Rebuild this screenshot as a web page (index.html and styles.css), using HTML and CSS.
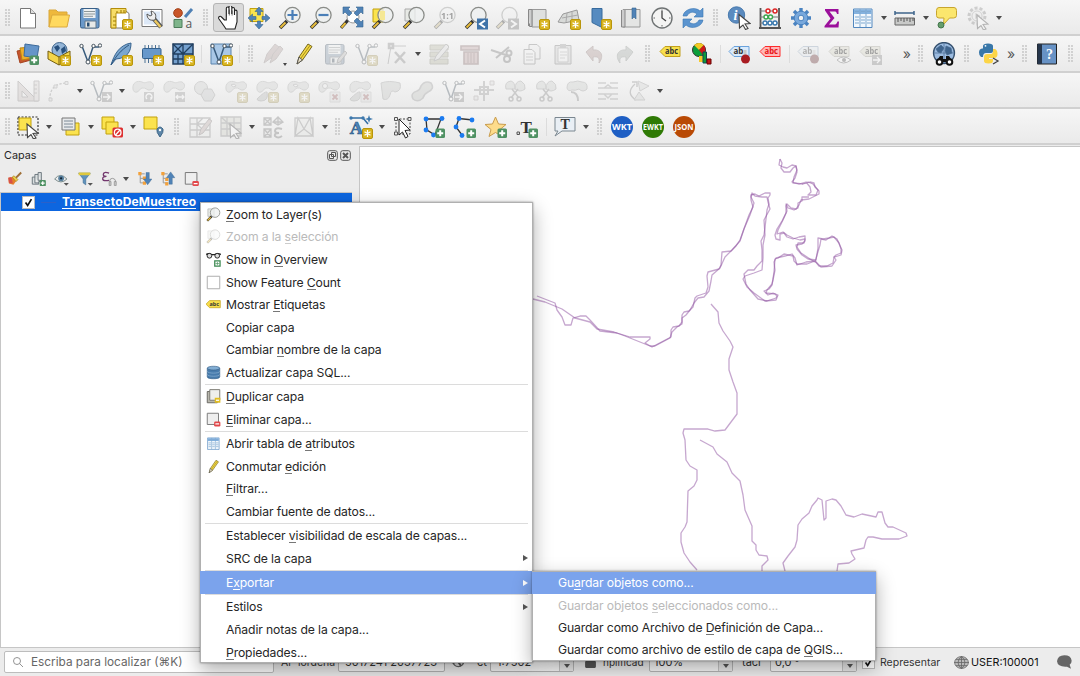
FILE: index.html
```html
<!DOCTYPE html>
<html lang="es">
<head>
<meta charset="utf-8">
<title>QGIS</title>
<link rel="stylesheet" href="styles.css">
</head>
<body>
<svg class="defs">
<defs>
<g id="star"><rect x="13.500" y="13.500" width="10" height="10" rx="1.500" class="gold"/><path d="M18.500 15v7M15.500 16.800l6 3.500M21.500 16.800l-6 3.500" class="w1"/></g>
<g id="plus"><rect x="13.500" y="13.500" width="9.500" height="9.500" rx="1.500" fill="#4f9163"/><path d="M18.200 15.300v6M15.200 18.300h6" stroke="#fff" stroke-width="2"/></g>
<g id="lens"><path d="M2 22l7-7" stroke="#333" stroke-width="3.600"/><path d="M2.500 21.500l5-5" stroke="#e8bd3c" stroke-width="2"/><circle cx="14.500" cy="9" r="7.600" fill="#eef0f0" fill-opacity=".75" stroke="#8a8c88" stroke-width="1.300"/></g>
<g id="cursor"><path d="M11 9l11 9-5 .5 3 4.500-2.500 1-2.500-4.500-3.500 3z" fill="#fff" stroke="#444" stroke-width="1.100"/></g>
<g id="blob"><path d="M2 10C1 4 6 1 11 3c4 2 5-1 9 0 4 2 3 7-1 8-3 1-4-3-8-2-3 1-3 4-5 4-2 1-4-1-4-3z" fill="#ccd0cc" stroke="#a3a6a3"/></g>
<g id="vee"><path d="M4 4l6 16 5-15h6" class="navy"/><g class="dot"><circle cx="3.500" cy="4" r="1.700"/><circle cx="10" cy="20" r="2"/><circle cx="15.500" cy="4" r="1.700"/><circle cx="22" cy="3.500" r="1.700"/></g></g>
<g id="tag"><path d="M1 9.500L6 4.500h15v10H6z"/></g>
</defs>
<symbol id="new" viewBox="0 0 24 24"><path d="M4.500 2.500h10l5 5v14.500h-15z" fill="#fff" stroke="#777"/><path d="M14.500 2.500v5h5" fill="#ddd" stroke="#777"/></symbol>
<symbol id="open" viewBox="0 0 24 24"><path d="M2 21V4h7l2 2h9v4" fill="#eeb83c" stroke="#d9a73a"/><path d="M2 21l3-12h17.500l-2.500 12z" fill="#ffd95f" stroke="#dba93c"/></symbol>
<symbol id="save" viewBox="0 0 24 24"><rect x="2.500" y="2.500" width="18.500" height="19.500" rx="1.500" fill="#6a99ca" stroke="#396089"/><path d="M5.500 3h12v9h-12z" fill="#eef1f2"/><path d="M6 5.500h11M6 8h11M6 10.300h9" stroke="#8c9799"/><path d="M7 15h11v7H7z" fill="#e6e9e8" stroke="#63798c"/><path d="M9 16.500h2.500v4H9z" fill="#264c73"/></symbol>
<symbol id="layout" viewBox="0 0 24 24"><path d="M2 2.500h12l6 5v14.500H2z" fill="#fff" stroke="#777"/><path d="M2 2.500h15v4.500H7v15H2z" fill="#f7dd68" stroke="#b38d0a"/><path d="M8 5v2m4-3v3m3-3v3M4 11h3m-3 4h3m-3 4h3" stroke="#9b7900"/><use href="#star"/></symbol>
<symbol id="manager" viewBox="0 0 24 24"><path d="M2 3.500h20v17H2z" fill="#fff" stroke="#777"/><path d="M4 5.500h16v13H4z" fill="#dce8f7"/><path d="M14 13l7 8" stroke="#55585a" stroke-width="4.500"/><path d="M14.500 14l6 7" stroke="#ecc85f" stroke-width="2.500"/><path d="M7 8c0 5 3 7 8 6 2-5 0-8-4-9l1 4-2 1z" fill="#eee" stroke="#555"/></symbol>
<symbol id="style" viewBox="0 0 24 24"><circle cx="7" cy="7" r="4.300" fill="#c95528" stroke="#a24017"/><path d="M14 11l7-8" stroke="#4f80b4" stroke-width="3"/><path d="M3 13.500h8v8H3z" fill="#7fb58b" stroke="#4d7c5a"/><text x="14.500" y="22" class="ic" font-size="12" fill="#555">a</text></symbol>
<symbol id="hand" viewBox="0 0 24 24"><path d="M7.500 15L4.500 12c-2-2-3.500.5-2.500 2l5 7 2 3h9l2-7V6.500c0-1.800-2.500-1.800-2.500 0V10 4c0-2-2.700-2-2.700 0v5-7c0-2-2.800-2-2.800 0v7-5.500c0-2-2.700-2-2.700 0V15z" transform="translate(1 -1)" fill="#fff" stroke="#222" stroke-width="1.100"/><path d="M10.500 3.500v7m2.800-7v6m2.800-5v5" stroke="#333" stroke-width=".7"/></symbol>
<symbol id="pan" viewBox="0 0 24 24"><path d="M3 2.500h13v13H3z" class="y"/><path d="M12 1l4 4.500h-2.500V9h-3V5.500H8zM12 23l4-4.500h-2.500V15h-3v3.500H8zM1 12l4.500-4v2.500H9v3H5.500V16zM23 12l-4.500-4v2.500H15v3h3.500V16z" class="blue"/></symbol>
<symbol id="zin" viewBox="0 0 24 24"><use href="#lens"/><path d="M14.500 4v10M9.500 9h10" stroke="#4a7fb8" stroke-width="2.200"/></symbol>
<symbol id="zout" viewBox="0 0 24 24"><use href="#lens"/><path d="M9.500 9h10" stroke="#4a7fb8" stroke-width="2.200"/></symbol>
<symbol id="zfull" viewBox="0 0 24 24"><path d="M1 22l8-9" stroke="#333" stroke-width="3.200"/><path d="M1.500 21.500l4-4.500" stroke="#e6bb3a" stroke-width="2"/><circle cx="13" cy="11" r="6" fill="#fff" stroke="#999"/><path d="M3 1h7L8 3l4 4-3 3-4-4-2 2zM23 1h-7l2 2-4 4 3 3 4-4 2 2zM23 21h-7l2-2-4-4 3-3 4 4 2-2z" class="blue"/></symbol>
<symbol id="zsel" viewBox="0 0 24 24"><path d="M2 3h10v13H2z" class="y"/><use href="#lens"/><path d="M9 5h5v9H9z" fill="#f5e894"/></symbol>
<symbol id="zlay" viewBox="0 0 24 24"><path d="M3 3h10v12H3z" fill="#e7e9e5" stroke="#aaa"/><use href="#lens"/></symbol>
<symbol id="znat" viewBox="0 0 24 24"><use href="#lens"/><text x="8" y="13" class="ic b" font-size="9">1:1</text></symbol>
<symbol id="zprev" viewBox="0 0 24 24"><use href="#lens"/><path d="M13 12.500h11v11H13z" fill="#3f73a8"/><path d="M21 14.500L16 18l5 3.500" class="w2"/></symbol>
<symbol id="znext" viewBox="0 0 24 24"><use href="#lens"/><path d="M13 12.500h11v11H13z" fill="#777"/><path d="M16 14.500l5 3.500-5 3.500" class="w2"/></symbol>
<symbol id="map2d" viewBox="0 0 24 24"><path d="M6 3.500h14V21H6z" fill="#dfe0df" stroke="#999"/><path d="M2.500 3.500H6v17H3.500v-3M2.500 3.500V20" fill="#ccc" stroke="#888"/><use href="#star"/></symbol>
<symbol id="map3d" viewBox="0 0 24 24"><path d="M1 16l5-8 14-4 2 10-15 3z" fill="#d8dad8" stroke="#999"/><path d="M5 12l16-3M10 7l-1 9M15 6v9" stroke="#aaa"/><use href="#star"/></symbol>
<symbol id="bmnew" viewBox="0 0 24 24"><path d="M4 2.500h10v19l-10-5z" fill="#568bc0" stroke="#376b9d"/><use href="#star"/></symbol>
<symbol id="bm" viewBox="0 0 24 24"><path d="M4 3.500h17V21H4z" fill="#e4e5e4" stroke="#999"/><path d="M2.500 4v17H6V4" fill="#ccc" stroke="#888"/><path d="M13 2h4v11l-2-2-2 2z" class="blue"/></symbol>
<symbol id="clock" viewBox="0 0 24 24"><circle cx="12" cy="12" r="10" fill="#f4f4f3" stroke="#6f7374" stroke-width="1.400"/><path d="M12 5v7l4 3" fill="none" stroke="#444" stroke-width="1.300"/><path d="M12 3.500v1.500M12 19v1.500M3.500 12H5M19 12h1.500" stroke="#666"/></symbol>
<symbol id="refresh" viewBox="0 0 24 24"><path d="M2 10c1-7 12-10 17-5l3-3v9h-9l3-3C12 5 8 6 6 10zM22 14c-1 7-12 10-17 5l-3 3v-9h9l-3 3c4 3 8 2 10-2z" fill="#5b94cf" stroke="#3977b3" stroke-width=".6"/></symbol>
<symbol id="info" viewBox="0 0 24 24"><circle cx="9.500" cy="9" r="8.200" fill="#5b8bbf" stroke="#487aae"/><text x="6.500" y="14" font-size="14" class="serif it" fill="#fff">i</text><g transform="translate(1 -.5)"><use href="#cursor"/></g></symbol>
<symbol id="abacus" viewBox="0 0 24 24"><path d="M2.500 2v19M21 2v19M1 22h22" stroke="#555" stroke-width="1.800"/><path d="M2 5h19M2 11h19M2 17h19" stroke="#777"/><g fill="#fff" stroke-width="1.400"><g stroke="#d22"><circle cx="10" cy="5" r="2"/><circle cx="17" cy="5" r="2"/></g><g stroke="#3aa74e"><circle cx="8" cy="11" r="2"/><circle cx="12.500" cy="11" r="2"/></g><g stroke="#3878ae"><circle cx="7" cy="17" r="2"/><circle cx="12" cy="17" r="2"/><circle cx="17" cy="17" r="2"/></g></g></symbol>
<symbol id="gear" viewBox="0 0 24 24"><path d="M12 2v20M2 12h20M5 5l14 14M19 5L5 19" stroke="#4a83c1" stroke-width="3.400"/><circle cx="12" cy="12" r="6.800" fill="#78a8dc" stroke="#4a83c1"/><circle cx="12" cy="12" r="2.800" fill="#f2f2f2" stroke="#4a83c1"/></symbol>
<symbol id="sigma" viewBox="0 0 24 24"><path d="M5 3h13.500v5H17c-.5-2-1-2.500-3-2.500H9.500l5 6.500-5.500 6.500h5c2 0 2.500-.5 3.500-3h1.500l-.5 6H4.500v-1.500l6-7.500L5 4.500z" fill="#9b0f9b"/></symbol>
<symbol id="table" viewBox="0 0 24 24"><path d="M2.500 3h18.500v18.500h-18.500z" fill="#f2f8fd" stroke="#5388bf"/><path d="M3 3.500h17.500V8H3z" fill="#84b2df"/><path d="M9 3v18M15 3v18M4 5.500h4m2 0h4m2 0h4M4 11h4m2 0h4m2 0h4M4 14h4m2 0h4m2 0h4M4 17h4m2 0h4m2 0h4" stroke="#7da7cf"/></symbol>
<symbol id="ruler" viewBox="0 0 24 24"><path d="M2 5v4M21 5v4M2 7h19" stroke="#3e648b" stroke-width="1.500"/><path d="M2 12h19.500v7H2z" fill="#c8c9c8" stroke="#666"/><path d="M5 12v4m3-4v3m3-3v4m3-4v3m3-3v4m3-4v3" stroke="#555"/></symbol>
<symbol id="tip" viewBox="0 0 24 24"><path d="M4 1.500h15q2.500 0 2.500 3v5q0 2.500-3 2.500h-4L8.500 18.500 9 12H4Q1.500 12 1.500 9.500v-5Q1.500 1.500 4 1.500z" fill="#fbe66d" stroke="#c7a52e"/><circle cx="6" cy="19" r="3" fill="#659d6c" stroke="#43764b"/></symbol>
<symbol id="action" viewBox="0 0 24 24"><circle cx="11" cy="10" r="8" fill="#e4e4e4" stroke="#888" stroke-width="3" stroke-dasharray="3 2"/><circle cx="11" cy="10" r="5" fill="#eee" stroke="#999"/><path d="M9.500 7l5 3-5 3z" fill="#888"/><use href="#cursor"/></symbol>
<symbol id="sources" viewBox="0 0 24 24"><path d="M1 9l11-2 3 11-11 3z" fill="#c6552d" stroke="#a64420"/><path d="M4 6l12-1 1 11-11 2z" fill="#eeae2b" stroke="#b9840e"/><path d="M9 2l14 2-2 12-13-2z" fill="#6595c9" stroke="#3d6a9a"/><use href="#plus"/></symbol>
<symbol id="gpkg" viewBox="0 0 24 24"><circle cx="12.500" cy="8" r="7.500" fill="#94b5d7" stroke="#41678e"/><path d="M7 5l4-2 2 3-3 4zM14 7l4-3 1 5-4 3z" fill="#28517e"/><path d="M1 9l11 6 11-6v8l-11 6-11-6z" fill="#f4d54a" stroke="#735d0e"/><path d="M12 15v8" stroke="#735d0e"/><use href="#star"/></symbol>
<symbol id="shp" viewBox="0 0 24 24"><use href="#vee"/><use href="#star"/></symbol>
<symbol id="feather" viewBox="0 0 24 24"><path d="M2 23C5 13 10 3 22 1c0 8-3 15-15 16z" fill="#7aa6cf" stroke="#39648f"/><path d="M2 23C7 14 12 8 20 3" fill="none" stroke="#2d5680"/><use href="#star"/></symbol>
<symbol id="chip" viewBox="0 0 24 24"><path d="M5 3v18M8.500 3v18M12 3v18M15.500 3v18M19 3v18" stroke="#4d7295"/><rect x="2.500" y="6.500" width="18.500" height="10" rx="1" fill="#6798cb" stroke="#35618c"/><use href="#star"/></symbol>
<symbol id="mesh" viewBox="0 0 24 24"><path d="M2 2h20v20H2z" fill="#74a0ce" stroke="#203e5f" stroke-width="1.500"/><path d="M2 12h20M12 2v20M2 2l10 10M12 2L2 12M12 12l10-10M2 17h10M7 12v10" stroke="#203e5f" stroke-width="1.300"/><use href="#star"/></symbol>
<symbol id="virt" viewBox="0 0 24 24"><path d="M2 2h20v20H2z" fill="#a9c8e7" stroke="#5b84ad"/><use href="#vee"/><use href="#star"/></symbol>
<symbol id="pencils" viewBox="0 0 24 24"><path d="M3 21l3-9 8-10 4 3-8 11z" fill="#c79c98" stroke="#a08784"/><path d="M9 21l3-9 7-8 3 3-7 10z" fill="#c79c98" stroke="#a08784"/></symbol>
<symbol id="pencil" viewBox="0 0 24 24"><path d="M5 22l2-7L16 2l4 2.500L10.500 18z" fill="#f2d945" stroke="#75651e"/><path d="M5 22l2-7 3.500 3z" fill="#e9dfc7" stroke="#555"/><path d="M9 16L18 3.500" stroke="#aa8e19"/></symbol>
<symbol id="saveed" viewBox="0 0 24 24"><use href="#save" width="24" height="24"/><path d="M14 21l1-4 7-8 2 2-7 9z" fill="#bbb" stroke="#777"/></symbol>
<symbol id="vertex" viewBox="0 0 24 24"><path d="M3 22L6 4h15" fill="none" stroke="#888"/><path d="M4 2h4v4H4zM10 10l10 11M20 10L10 21" fill="#ddd" stroke="#888" stroke-width="2.500"/></symbol>
<symbol id="multi" viewBox="0 0 24 24"><path d="M3 3h18v5H3zM3 10h18v5H3zM3 17h18v5H3z" fill="#bcbc8a" stroke="#8f8f68"/><path d="M7 19l2-5L19 2l3 3-10 12z" fill="#ddd" stroke="#888"/></symbol>
<symbol id="trash" viewBox="0 0 24 24"><path d="M3 4h18v4H3zM6 10h14v12H6z" fill="#e09a9a" stroke="#a46161" stroke-width="1.600"/><path d="M10 11v10m3-10v10m3-10v10" stroke="#a46161"/></symbol>
<symbol id="cut" viewBox="0 0 24 24"><path d="M2 8l15 5M7 16L20 5" stroke="#777" stroke-width="2"/><circle cx="18" cy="17" r="3" fill="none" stroke="#777" stroke-width="2"/><circle cx="20" cy="11" r="2.500" fill="none" stroke="#777" stroke-width="2"/></symbol>
<symbol id="copy" viewBox="0 0 24 24"><path d="M9 2.500h8l3 3V17H9z" fill="#eee" stroke="#777"/><path d="M4 7.500h8l3 3V22H4z" fill="#f4f4f4" stroke="#777"/><path d="M6 12h7m-7 3h7m-7 3h7" stroke="#999"/></symbol>
<symbol id="paste" viewBox="0 0 24 24"><path d="M4 3.500h16V22H4z" fill="#d0d0d0" stroke="#777"/><path d="M7 6h10v14H7z" fill="#f4f4f4" stroke="#999"/><path d="M9 2h6v4H9z" fill="#999"/><path d="M9 10h7m-7 3h7m-7 3h5" stroke="#aaa"/></symbol>
<symbol id="undo" viewBox="0 0 24 24"><path d="M4 10l7-6v4c7-1 12 5 6 13 1-5-1-7-6-6v4z" fill="#cd8f88" stroke="#a4746e"/></symbol>
<symbol id="redo" viewBox="0 0 24 24"><path d="M20 10l-7-6v4C6 7 1 13 7 21c-1-5 1-7 6-6v4z" fill="#9fb0a6" stroke="#849188"/></symbol>
<symbol id="abc" viewBox="0 0 24 24"><use href="#tag" fill="#f7df4b" stroke="#c2a01e"/><text x="6" y="12.300" textLength="13" lengthAdjust="spacingAndGlyphs" class="ic b" font-size="8" fill="#333">abc</text></symbol>
<symbol id="diag" viewBox="0 0 24 24"><circle cx="9" cy="8" r="6.500" fill="#0b9e3b" stroke="#333"/><path d="M9 8L4 3q5-4 10 0z" fill="#f4c822"/><path d="M9 8l5-5q3 5-1 10z" fill="#cf1818"/><path d="M9 14h4v6H9z" fill="#f6c927"/><path d="M13 10h3.500v11H13z" fill="#0e9b3b" stroke="#145"/><path d="M17 17h4v5h-4z" fill="#c31515" stroke="#600"/></symbol>
<symbol id="abpin" viewBox="0 0 24 24"><use href="#tag" fill="#d9eafb" stroke="#6aa2dc"/><text x="5.500" y="12.300" class="ic b" font-size="8" fill="#333">ab</text><path d="M17 8v8" stroke="#c8c8c8" stroke-width="3"/><circle cx="17.500" cy="17" r="4.500" fill="#a91c22"/></symbol>
<symbol id="abcred" viewBox="0 0 24 24"><use href="#tag" fill="#ffb7b7" stroke="#ff2b2b"/><text x="5.500" y="12.300" textLength="13.500" lengthAdjust="spacingAndGlyphs" class="ic b" font-size="8" fill="#e81414">abc</text></symbol>
<symbol id="abeye" viewBox="0 0 24 24"><use href="#tag" fill="#d8d5ae" stroke="#a19f80"/><text x="6" y="12.300" textLength="13" lengthAdjust="spacingAndGlyphs" class="ic b" font-size="8">abc</text><path d="M9 18q6-6 14 0-8 6-14 0z" fill="#fff" stroke="#666"/><circle cx="16" cy="18" r="2" fill="#555"/></symbol>
<symbol id="abmove" viewBox="0 0 24 24"><use href="#tag" fill="#d8d5ae" stroke="#a19f80"/><text x="6" y="12.300" textLength="13" lengthAdjust="spacingAndGlyphs" class="ic b" font-size="8">abc</text><path d="M13 13h10v10H13z" fill="#888"/><path d="M14 18h7m-3-3l3 3-3 3" class="w1"/></symbol>
<symbol id="metas" viewBox="0 0 24 24"><circle cx="12" cy="11" r="10.500" fill="#9bbbe0" stroke="#35506e" stroke-width="1.300"/><path d="M4 7l5-4 3 3-3 5-3-1zM14 4l5 2 1 5-5 2-2-4zM2 11h20M12 1v20" fill="#3f648d" stroke="#46698e" stroke-width=".7"/><path d="M4 20l4-6h3v3h3v-3h3l4 6z" fill="#111"/><circle cx="7.500" cy="20" r="2.800" fill="#fff" stroke="#111" stroke-width="2"/><circle cx="17.500" cy="20" r="2.800" fill="#fff" stroke="#111" stroke-width="2"/></symbol>
<symbol id="python" viewBox="0 0 24 24"><path d="M6 7V4q0-2.500 5-2.500T16 4v5q0 2-2 2H9q-3 0-3 4H4q-2-1-2-4.500T5 6.500h6" fill="#3977a8"/><path d="M16 7h2q2.500 1 2.500 5T17 16h-5v1h4v2q0 2.500-4.500 2.500T7 19v-4q0-3 3-3h4q2.500 0 2-5z" fill="#fcd547"/><circle cx="8.500" cy="3.800" r=".9" fill="#fff"/><path d="M16 16l5 3-5 3" fill="none" stroke="#444" stroke-width="1.300"/></symbol>
<symbol id="help" viewBox="0 0 24 24"><path d="M2.500 2h19v20h-19z" fill="#6792c5" stroke="#222"/><path d="M2.500 2H7v20H2.500z" fill="#26364c"/><text x="11" y="16.500" class="serif" font-size="14" fill="#fff">?</text></symbol>
<symbol id="cad" viewBox="0 0 24 24"><path d="M2 2v20h20zM6 12v6h6z" fill="#d8c0bb" fill-rule="evenodd" stroke="#8d8482"/><path d="M18 2h5v20h-5zM18 6h3m-3 4h3m-3 4h3" fill="#dfd4cf" stroke="#938986"/></symbol>
<symbol id="arc" viewBox="0 0 24 24"><path d="M3 21Q2 5 19 4" fill="none" stroke="#888" stroke-width="1.300" stroke-dasharray="2.500 1.500"/><path d="M2 19h3v3H2zM7 6h3v3H7zM18 2.500h3v3h-3z" fill="#ddd" stroke="#999"/></symbol>
<symbol id="movef" viewBox="0 0 24 24"><use href="#vee"/><path d="M13 13h10v10H13z" fill="#888"/><path d="M14 18h7m-3-3l3 3-3 3" class="w1"/></symbol>
<symbol id="b1" viewBox="0 0 24 24"><use href="#blob"/><path d="M13 13h10v10H13z" fill="#999"/><path d="M16 20a3 3 0 1 1 4 0v-2" class="w1"/></symbol>
<symbol id="b2" viewBox="0 0 24 24"><use href="#blob"/><path d="M13 13h10v10H13z" fill="#999"/><path d="M14 18h8m-6-2l-2 2 2 2m4-4l2 2-2 2" class="w1"/></symbol>
<symbol id="b3" viewBox="0 0 24 24"><circle cx="8" cy="9" r="6.500" fill="#ccd0cc" stroke="#999"/><path d="M8 16l3.500-6h7l3.500 6-3.500 6h-7z" fill="#c5cacc" stroke="#999"/></symbol>
<symbol id="b4" viewBox="0 0 24 24"><use href="#blob"/><path d="M7 6q4-2 5 1-3 2-5-1z" fill="#f3f3f3" stroke="#999"/><use href="#star"/></symbol>
<symbol id="b5" viewBox="0 0 24 24"><use href="#blob"/><path d="M2 20q8-8 10-7 2 9-6 9-4 0-4-2z" fill="#b9bdb9" stroke="#999"/><use href="#star"/></symbol>
<symbol id="b6" viewBox="0 0 24 24"><use href="#blob"/><circle cx="8" cy="7" r="2.500" fill="#eee" stroke="#999"/><path d="M13 13h10v10H13z" fill="#ddd" stroke="#bbb"/><path d="M15.500 15.500l5 5m0-5l-5 5" stroke="#d55" stroke-width="1.800"/></symbol>
<symbol id="b7" viewBox="0 0 24 24"><use href="#blob"/><path d="M2 20q8-8 10-7 2 9-6 9-4 0-4-2z" fill="#b9bdb9" stroke="#999"/><path d="M13 13h10v10H13z" fill="#ddd" stroke="#bbb"/><path d="M15.500 15.500l5 5m0-5l-5 5" stroke="#d55" stroke-width="1.800"/></symbol>
<symbol id="b8" viewBox="0 0 24 24"><path d="M2 4q8-3 19 0 2 8-5 9-4-3-5 3-2 6-7 4Q3 12 2 4z" fill="#c5c8c2" stroke="#999"/></symbol>
<symbol id="b9" viewBox="0 0 24 24"><path d="M3 20q-3-6 4-8 3-1 4-5 4-6 10-3 4 6-3 9-4 2-5 6-5 5-10 1z" fill="#c2c7be" stroke="#999" stroke-width="1.600"/></symbol>
<symbol id="trim" viewBox="0 0 24 24"><path d="M2 11h20M12 2v20M8 8h8v7H8z" fill="none" stroke="#999" stroke-width="2"/><path d="M18 2h4v4h-4zM2 17h4v4H2z" fill="#ddd" stroke="#a99"/></symbol>
<symbol id="split" viewBox="0 0 24 24"><path d="M3 10q-2-7 5-8 4 1 4 8zM12 10q0-8 6-8 5 3 4 8-5 4-10 0z" fill="#c9cec8" stroke="#999"/><path d="M9 10l7 9M15 10l-7 9" stroke="#888" stroke-width="1.600"/><circle cx="8" cy="20" r="2" fill="none" stroke="#888" stroke-width="1.500"/><circle cx="16" cy="20" r="2" fill="none" stroke="#888" stroke-width="1.500"/></symbol>
<symbol id="merge" viewBox="0 0 24 24"><path d="M2 9q0-7 6-6 5-2 9 0 6 0 5 7-4 4-8 0-4 2-7 1-4 2-5-2z" fill="#c9cec8" stroke="#999"/><path d="M6 13q7 0 7 9" fill="none" stroke="#888" stroke-width="2"/></symbol>
<symbol id="align" viewBox="0 0 24 24"><path d="M2 4h8m4 0h8M2 9h20M2 15h20M2 20h8m4 0h8M8 9l4-3 4 3m-8 6l4 4 4-4" fill="none" stroke="#999" stroke-width="1.500"/></symbol>
<symbol id="rotsym" viewBox="0 0 24 24"><path d="M9 21Q-2 14 8 5M5 3h5v5" fill="none" stroke="#888" stroke-width="1.400"/><path d="M11 2l11 5-9 5zM12 13l6 8H7z" fill="#d2d4d2" stroke="#999"/></symbol>
<symbol id="sel" viewBox="0 0 24 24"><path d="M2 2h20v18H2z" fill="none" stroke="#333" stroke-dasharray="2 1.500" stroke-width="1.200"/><path d="M3 3h12v12H3z" class="y"/><use href="#cursor"/></symbol>
<symbol id="selval" viewBox="0 0 24 24"><path d="M8 8h13v12H8z" class="y"/><path d="M4 3h13v12H4z" fill="#e7e9eb" stroke="#777"/><path d="M6 6h9M6 9h9M6 12h9" stroke="#7d8a96"/></symbol>
<symbol id="desel" viewBox="0 0 24 24"><path d="M2 2h12v12H2z" class="y"/><path d="M6 7h12v12H6z" class="y"/><rect x="12.500" y="12.500" width="10.500" height="10" rx="1.500" fill="#dd3030"/><circle cx="17.700" cy="17.500" r="3.300" class="w1"/><path d="M15.500 20l4.500-5" class="w1"/></symbol>
<symbol id="selloc" viewBox="0 0 24 24"><path d="M2 2h13v12H2z" class="y"/><path d="M18 22q-4-5-3-8 3-4 6 0 1 3-3 8z" fill="#5d86a8" stroke="#426a8a"/><circle cx="18" cy="15" r="1.200" fill="#fff"/></symbol>
<symbol id="e1" viewBox="0 0 24 24"><path d="M2 3h20v19H2zM2 9h20M2 15h20M9 3v19M15 3l-6 6 6 6 7-12" fill="#e9ebe9" stroke="#888" stroke-width="1.300"/><path d="M11 20l2-6 8-10 3 2-9 12z" fill="#cca8a2" stroke="#877"/></symbol>
<symbol id="e2" viewBox="0 0 24 24"><path d="M2 2h20v19H2zM2 8h20M2 14h20M8 2v19M15 2v19M2 2l20 18" fill="#cfd2bd" stroke="#888" stroke-width="1.300"/><use href="#cursor"/></symbol>
<symbol id="e3" viewBox="0 0 24 24"><path d="M3 3h7v7H3zM3 14h7v8H3zM3 3l7 7m0-7l-7 7M3 14l7 8m0-8l-7 8M12 7l5-5 5 5-5 3zM12 7h10M17 2v8" fill="#ddd" stroke="#777" stroke-width="1.300"/><path d="M21 14q-7-2-7 2 0 2 4 2-5 0-4 3 3 3 7 0" fill="none" stroke="#777" stroke-width="2"/></symbol>
<symbol id="e4" viewBox="0 0 24 24"><path d="M3 3h18v18H3zM3 21L6 3l6 11 6-11 3 18-9-7z" fill="#e4e5de" stroke="#888" stroke-width="1.300"/></symbol>
<symbol id="annlay" viewBox="0 0 24 24"><path d="M2 3h12l5 6" fill="none" stroke="#336da3" stroke-width="1.500"/><g fill="#3c78ad"><circle cx="2" cy="3" r="1.700"/><circle cx="14" cy="3" r="1.700"/><path d="M20 0l1 3 3 1-3 1-1 3-1-3-3-1 3-1z"/></g><text x="1" y="19" class="serifb" font-size="17" fill="#4b83b8" stroke="#285680" stroke-width=".6">A</text><use href="#star"/></symbol>
<symbol id="annsel" viewBox="0 0 24 24"><path d="M5 4h14v15H5z" fill="none" stroke="#444" stroke-dasharray="2 1.500"/><path d="M3.500 2.500h3v3h-3zM17 2.500h3v3h-3zM3.500 17h3v3h-3z" fill="#eee" stroke="#555"/><path d="M8 4l11 11-5 .5 3 6-2.500 1.500-3-6L8 20z" fill="#fff" stroke="#222"/></symbol>
<symbol id="annpoly" viewBox="0 0 24 24"><path d="M4 4h15l-6 16-8-5z" fill="#eee" stroke="#333" stroke-width="1.300"/><g fill="#1b7bf0"><circle cx="4" cy="4" r="2.400"/><circle cx="20" cy="3.500" r="2.400"/><circle cx="4" cy="15" r="2.400"/><circle cx="11.500" cy="20" r="2.400"/></g><use href="#plus"/></symbol>
<symbol id="annline" viewBox="0 0 24 24"><path d="M20 5L6 3.500 3 12l6 8" fill="none" stroke="#333" stroke-width="1.300"/><g fill="#1b7bf0"><circle cx="19" cy="5" r="2.400"/><circle cx="6" cy="3.500" r="2.400"/><circle cx="3" cy="12" r="2.400"/><circle cx="9" cy="20.500" r="2.400"/></g><use href="#plus"/></symbol>
<symbol id="annpt" viewBox="0 0 24 24"><path d="M11.500 2l3 7 7.500.5-6 5 2 7-6.500-4-6.500 4 2-7-6-5L8.500 9z" fill="#fddc8b" stroke="#c99c4d"/><use href="#plus"/></symbol>
<symbol id="anntxt" viewBox="0 0 24 24"><text x="5.500" y="17.500" class="serif" font-size="17" fill="#333">T</text><path d="M2 17h2.500v2.500H2z" fill="#ddd" stroke="#555"/><use href="#plus"/></symbol>
<symbol id="anntip" viewBox="0 0 24 24"><path d="M2 2.500h20V16H9l-7 5 3-5H2z" fill="#e9eff5" stroke="#7b8790"/><text x="7.500" y="14" class="serif" font-size="14" fill="#333">T</text></symbol>
<symbol id="wkt" viewBox="0 0 24 24"><circle cx="12" cy="12" r="11" fill="#1f5fc4"/><text x="12" y="15.200" text-anchor="middle" textLength="20" lengthAdjust="spacingAndGlyphs" class="ic b" font-size="9.500" fill="#fff">WKT</text></symbol>
<symbol id="ewkt" viewBox="0 0 24 24"><circle cx="12" cy="12" r="11" fill="#2f7a05"/><text x="12" y="15.200" text-anchor="middle" textLength="20" lengthAdjust="spacingAndGlyphs" class="ic b" font-size="9.500" fill="#fff">EWKT</text></symbol>
<symbol id="json" viewBox="0 0 24 24"><circle cx="12" cy="12" r="11" fill="#b94a05"/><text x="12" y="15.200" text-anchor="middle" textLength="19" lengthAdjust="spacingAndGlyphs" class="ic b" font-size="9.500" fill="#fff">JSON</text></symbol>
<symbol id="brush" viewBox="0 0 24 24"><path d="M13 11l9-9" stroke="#9f6f37" stroke-width="3"/><path d="M2 10l8-1 5 5-5 7-7-2z" fill="#e7802c"/><path d="M8 9l3-2 6 6-3 3z" fill="#e8d04a" stroke="#a37e24"/><path d="M2 10l5-1 2 10-6-1z" fill="#d6514b"/></symbol>
<symbol id="addgrp" viewBox="0 0 24 24"><path d="M2 20V9h4V5h5V2h5v14h-4v4zM6 9v9h6M11 5v9h5" fill="#d9dedf" stroke="#657078" stroke-width="1.400"/><use href="#plus"/></symbol>
<symbol id="eye" viewBox="0 0 24 24"><path d="M1 12q9-11 19 0-9 9-19 0z" fill="#eee" stroke="#788" stroke-width="1.500"/><circle cx="11" cy="11" r="4.500" fill="#58809f"/><circle cx="11" cy="11" r="1.800" fill="#123"/><path d="M15 18h8l-4 4.500z" fill="#555"/></symbol>
<symbol id="funnel" viewBox="0 0 24 24"><path d="M1 3h18l-7 9v9l-4-3v-6z" fill="#5f93bd" stroke="#3f6f97"/><path d="M1 2h18v4H1z" fill="#dfc83d"/><path d="M15 18h8l-4 4.500z" fill="#555"/></symbol>
<symbol id="eps" viewBox="0 0 24 24"><path d="M11 3Q2 0 2 5q0 3 5 3-6 0-6 4 1 4 10 2" fill="none" stroke="#74386f" stroke-width="2"/><path d="M12 20v-5q0-4 4-4t5 4v5" fill="none" stroke="#999" stroke-width="1.500"/><path d="M11 16h3v6h-3zM19 16h3v6h-3z" fill="#ccc" stroke="#888"/></symbol>
<symbol id="expand" viewBox="0 0 24 24"><path d="M3 4h9M5 4v14h7M5 11h7" fill="none" stroke="#999" stroke-width="1.500"/><path d="M2 1h5v5H2zM9 8h5v5H9zM9 16h5v5H9z" fill="#f3a13b"/><path d="M14 2h5v10h4l-6.500 9L10 12h4z" class="blue"/></symbol>
<symbol id="collapse" viewBox="0 0 24 24"><path d="M3 4h9M5 4v14h7M5 11h7" fill="none" stroke="#999" stroke-width="1.500"/><path d="M2 1h5v5H2zM8 10h5v5H8zM8 17h5v5H8z" fill="#f3a13b"/><path d="M14 20h5V10h4l-6.500-9L10 10h4z" class="blue"/></symbol>
<symbol id="remove" viewBox="0 0 24 24"><path d="M2 2h18v18H2z" fill="#eee" stroke="#777" stroke-width="1.500"/><rect x="13" y="15" width="10" height="8" rx="2" fill="#e2474a"/><path d="M15 19h6" class="w2"/></symbol>
<symbol id="glasses" viewBox="0 0 24 24"><path d="M0 4q4-3 9 0h5q5-3 10 0" fill="none" stroke="#222" stroke-width="2"/><circle cx="5.500" cy="6" r="3.800" fill="#ddd" stroke="#222" stroke-width="1.500"/><circle cx="18" cy="6" r="3.800" fill="#ddd" stroke="#222" stroke-width="1.500"/><path d="M14 14h8.500v8.500H14z" fill="#fff" stroke="#3b8850" stroke-width="2"/><path d="M18.200 16v5m-3-2.500h6" stroke="#3b8850"/></symbol>
<symbol id="box" viewBox="0 0 24 24"><path d="M2 2h20v20H2z" fill="#fff" stroke="#aaa" stroke-width="1.500"/></symbol>
<symbol id="db" viewBox="0 0 24 24"><path d="M2 5v14c0 4 20 4 20 0V5" fill="#477bac" stroke="#335d85"/><ellipse cx="12" cy="5" rx="10" ry="3" fill="#82aed4" stroke="#335d85"/><path d="M2 10c0 4 20 4 20 0M2 15c0 4 20 4 20 0" fill="none" stroke="#91b6d5"/></symbol>
<symbol id="dup" viewBox="0 0 24 24"><path d="M2 4h16v18H2z" fill="#b8b7ad" stroke="#66655f" stroke-width="1.500"/><path d="M6 1h16v17H6z" fill="#efefec" stroke="#77766e" stroke-width="1.500"/><path d="M14 14h9v8h-9z" fill="#e1bd22"/><path d="M16 18h5" class="w2"/></symbol>
<symbol id="lupa" viewBox="0 0 24 24"><circle cx="10" cy="10" r="7" fill="none" stroke="#888" stroke-width="1.800"/><path d="M15 15l7 7" stroke="#888" stroke-width="1.800"/></symbol>
<symbol id="globe" viewBox="0 0 24 24"><ellipse cx="12" cy="12" rx="11" ry="9.500" fill="#bbb" stroke="#777" stroke-width="1.500"/><path d="M0 12h24M12 2v20M3 7h18M3 17h18M12 2Q1 12 12 22 23 12 12 2" fill="none" stroke="#666" stroke-width="1.300"/></symbol>
<symbol id="bubble" viewBox="0 0 24 24"><path d="M11 2q10 0 11 8 0 4-3 6l2 6-6-3Q1 20 0 11q1-9 11-9z" fill="#666"/></symbol>
<symbol id="lock" viewBox="0 0 24 24"><path d="M6 11V6q6-7 12 0v5" fill="none" stroke="#555" stroke-width="3"/><rect x="2" y="9" width="20" height="13" rx="2" fill="#555"/></symbol>
<symbol id="track" viewBox="0 0 24 24"><circle cx="14" cy="11" r="8" fill="#ddd" stroke="#666" stroke-width="2"/><path d="M2 10q5 6 10-1l6 9M10 9l3-5 3 9" fill="none" stroke="#555" stroke-width="3"/></symbol>
</svg>

<div class="app">
<div class="bar r1"><span class="grip first"></span>
<svg class="t"><use href="#new"/></svg><svg class="t"><use href="#open"/></svg><svg class="t"><use href="#save"/></svg><svg class="t"><use href="#layout"/></svg><svg class="t"><use href="#manager"/></svg><svg class="t"><use href="#style"/></svg><span class="grip"></span>
<span class="pressed"><svg class="t"><use href="#hand"/></svg></span><svg class="t"><use href="#pan"/></svg><svg class="t"><use href="#zin"/></svg><svg class="t"><use href="#zout"/></svg><svg class="t"><use href="#zfull"/></svg><svg class="t"><use href="#zsel"/></svg><svg class="t"><use href="#zlay"/></svg><svg class="t off"><use href="#znat"/></svg><svg class="t"><use href="#zprev"/></svg><svg class="t off"><use href="#znext"/></svg><svg class="t"><use href="#map2d"/></svg><svg class="t"><use href="#map3d"/></svg><svg class="t"><use href="#bmnew"/></svg><svg class="t"><use href="#bm"/></svg><svg class="t"><use href="#clock"/></svg><svg class="t"><use href="#refresh"/></svg><span class="grip"></span>
<svg class="t"><use href="#info"/></svg><svg class="t"><use href="#abacus"/></svg><svg class="t"><use href="#gear"/></svg><svg class="t"><use href="#sigma"/></svg><svg class="t"><use href="#table"/></svg><span class="dd"></span><svg class="t"><use href="#ruler"/></svg><span class="dd"></span><svg class="t"><use href="#tip"/></svg><svg class="t off"><use href="#action"/></svg><span class="dd"></span></div>

<div class="bar"><span class="grip first"></span>
<svg class="t"><use href="#sources"/></svg><svg class="t"><use href="#gpkg"/></svg><svg class="t"><use href="#shp"/></svg><svg class="t"><use href="#feather"/></svg><svg class="t"><use href="#chip"/></svg><svg class="t"><use href="#mesh"/></svg><span class="sep"></span><svg class="t"><use href="#virt"/></svg><span class="sep"></span><span class="grip"></span>
<span class="corner"><svg class="t off"><use href="#pencils"/></svg></span><svg class="t"><use href="#pencil"/></svg><svg class="t off"><use href="#saveed"/></svg><svg class="t off"><use href="#shp"/></svg><svg class="t off"><use href="#vertex"/></svg><span class="dd"></span><svg class="t off"><use href="#multi"/></svg><svg class="t off"><use href="#trash"/></svg><svg class="t off"><use href="#cut"/></svg><svg class="t off"><use href="#copy"/></svg><svg class="t off"><use href="#paste"/></svg><svg class="t off"><use href="#undo"/></svg><svg class="t off"><use href="#redo"/></svg><span class="grip"></span>
<svg class="t"><use href="#abc"/></svg><svg class="t"><use href="#diag"/></svg><span class="sep"></span><svg class="t"><use href="#abpin"/></svg><svg class="t"><use href="#abcred"/></svg><span class="sep"></span><svg class="t off"><use href="#abpin"/></svg><svg class="t off"><use href="#abeye"/></svg><svg class="t off"><use href="#abmove"/></svg><span class="more wide">»</span><span class="grip"></span>
<svg class="t"><use href="#metas"/></svg><span class="grip"></span><svg class="t"><use href="#python"/></svg><span class="more">»</span><span class="grip"></span><svg class="t"><use href="#help"/></svg><span class="grip"></span></div>

<div class="bar"><span class="grip first"></span>
<svg class="t off"><use href="#cad"/></svg><svg class="t off"><use href="#arc"/></svg><span class="dd"></span><svg class="t off"><use href="#movef"/></svg><span class="dd"></span><svg class="t off"><use href="#b1"/></svg><svg class="t off"><use href="#b2"/></svg><svg class="t off"><use href="#b3"/></svg><svg class="t off"><use href="#b4"/></svg><svg class="t off"><use href="#b5"/></svg><svg class="t off"><use href="#b4"/></svg><svg class="t off"><use href="#b6"/></svg><svg class="t off"><use href="#b7"/></svg><svg class="t off"><use href="#b8"/></svg><svg class="t off"><use href="#b9"/></svg><svg class="t off"><use href="#movef"/></svg><svg class="t off"><use href="#trim"/></svg><svg class="t off"><use href="#split"/></svg><svg class="t off"><use href="#split"/></svg><svg class="t off"><use href="#merge"/></svg><svg class="t off"><use href="#align"/></svg><svg class="t off"><use href="#rotsym"/></svg><span class="dd"></span></div>

<div class="bar r4"><span class="grip first"></span>
<svg class="t"><use href="#sel"/></svg><span class="dd"></span><svg class="t"><use href="#selval"/></svg><span class="dd"></span><svg class="t"><use href="#desel"/></svg><span class="dd"></span><svg class="t"><use href="#selloc"/></svg><span class="grip"></span>
<svg class="t off"><use href="#e1"/></svg><svg class="t off"><use href="#e2"/></svg><span class="dd"></span><svg class="t off"><use href="#e3"/></svg><svg class="t off"><use href="#e4"/></svg><span class="dd"></span><span class="grip"></span>
<svg class="t"><use href="#annlay"/></svg><span class="dd"></span><svg class="t"><use href="#annsel"/></svg><svg class="t"><use href="#annpoly"/></svg><svg class="t"><use href="#annline"/></svg><svg class="t"><use href="#annpt"/></svg><svg class="t"><use href="#anntxt"/></svg><span class="sep"></span><svg class="t"><use href="#anntip"/></svg><span class="dd"></span><span class="grip"></span>
<svg class="t"><use href="#wkt"/></svg><svg class="t"><use href="#ewkt"/></svg><svg class="t"><use href="#json"/></svg></div>

<div class="main">
<div class="panel">
<div class="title"><span>Capas</span><svg class="winbtn" viewBox="0 0 11 11"><rect x=".7" y=".7" width="9.600" height="9.600" rx="2"/><path d="M4.500 2.500h4v4h-4zM2.500 4.500h4v4h-4z"/></svg><svg class="winbtn" viewBox="0 0 11 11"><rect x=".7" y=".7" width="9.600" height="9.600" rx="2"/><path d="M3 3l5 5M8 3L3 8" stroke-width="2"/></svg></div>
<div class="ptools"><svg><use href="#brush"/></svg><svg><use href="#addgrp"/></svg><svg><use href="#eye"/></svg><svg><use href="#funnel"/></svg><svg><use href="#eps"/></svg><span class="dd"></span><svg><use href="#expand"/></svg><svg><use href="#collapse"/></svg><svg><use href="#remove"/></svg></div>
<div class="tree"><div class="layer"><svg class="check" viewBox="0 0 13 13"><path d="M3 6.500l2.500 3.500L10 2.500"/></svg><i></i><span>TransectoDeMuestreo</span></div></div>
</div>
<div class="canvas">
<svg class="map" viewBox="360 147 720 501"><g>
<path d="M780 159L779 165 783 167 787 168 792 165 796 166 797 170 794 177 793 183 803 184 810 182 814 183 815 187 819 191 819 194 815 196 809 199 801 200 799 205 796 209 791 208 787 204 786 206 786 213 782 221 777 229 775 235 776 239 780 240 780 234 784 233 787 237 793 239 799 237 805 236 805 241 802 244 796 245 797 249 802 255 808 259 816 260 818 248 818 238 823 239 829 238 834 237 839 243 841 249 841 253 836 255 834 257 833 263 827 266 819 266 815 261 806 262 797 265 795 258 792 254 785 256 776 258 774 262 775 270 773 280 772 284 767 290 766 293 775 294 777 296 776 298 767 301 758 299 750 290 746 284 744 274 748 270 754 270 757 266 762 261 762 250 761 241 764 235 766 219 767 210 769 204 768 198 770 195 770 193 765 193 759 196 755 194 751 195 751 200 753 207 749 215 745 226 740 240 736 246 731 251 722 252 721 265 719 269 708 272 707 276 708 287 706 293 697 296 695 298 693 307 689 311 684 312 682 315 682 322 679 326 673 327 671 330 671 337 652 347 645 343 650 339 650 337 630 337 617 333 600 331 590 320 586 316 580 316 573 318 571 325 565 325 562 317 557 310 555 303 537 296"/>
<path d="M780 159L782 163 781 168 784 172 790 172 793 168 796 166 797 172 795 178 792 182 799 184 806 182 810 187 811 192 808 195 816 195 818 190 813 184 808 182 802 184M809 197L802 197 802 201 798 203 798 208 794 210 788 208 786 204 787 211 783 220 778 230 777 234 783 232 787 235 793 238 800 240 805 239 804 243 798 243 797 247 801 253 810 259 815 262 817 255 820 245 821 239 826 240 832 236 837 239 842 250 841 255 834 257 836 260 832 266 821 267 815 261 807 264 797 264 794 261 793 256 784 254 778 258 775 259 774 272 772 285 769 289 764 291 768 295 773 293 778 295 776 300 765 301 754 293 747 287 743 279 745 276 754 273 762 270 763 258 763 245 765 235 764 220 770 209 768 202 767 197 762 197 755 196 752 193 751 197 754 203 750 215 744 229 740 241 732 250 725 257 720 268 712 275 711 281 709 291 704 297 698 298 694 303 690 310 686 315 682 318 682 324 677 327 672 332 670 338 655 346 650 346 635 340 625 336 614 332 597 329 590 322 575 318 562 309 545 302 533 299"/>
<path d="M711 304L718 312 719 323 723 331 730 341 733 347 729 359 729 370 733 382 737 393 737 414 731 422 725 430 715 431 708 429 684 429 683 433 685 440 686 460 690 466 697 470 697 480 694 486 688 491 687 522 685 527 681 533 681 542 684 553 690 562 697 570M700 440L713 447 717 454 727 462 732 473 740 481 743 495 745 510 752 526 752 541 756 545 756 550 759 555 767 556 768 560 762 566 762 571M785 571L783 563 788 556 795 547 797 540 798 525 802 519 809 513 812 506 817 500 818 498 822 500 824 520 826 518 826 501 832 499 836 500 841 506 846 515 854 517 862 514 876 517 878 512 882 512 885 523 888 527 893 527 906 533 907 536 899 539 882 539 873 537 868 537 866 540 864 548 851 551 852 554 855 559 849 563 838 564 837 571"/></g></svg>
</div>
</div>

<div class="status">
<div class="locator"><svg><use href="#lupa"/></svg>Escriba para localizar (⌘K)</div>
<span class="s-coord">Ar &#8216;lordena</span><div class="field f-coord">5017241 2037723</div><svg class="s-track"><use href="#track"/></svg><span class="s-scale">ct</span><div class="field f-scale">1:7502<b></b></div><svg class="s-lock"><use href="#lock"/></svg><span class="s-mag">nplificad</span><div class="field f-mag">100%<b></b></div><span class="s-rot">taci</span><div class="field f-rot">0,0 °<b></b></div><svg class="scheck" viewBox="0 0 13 13"><path d="M3 6.500l2.500 3.500L10 2.500"/></svg><span class="s-rep">Representar</span><svg class="s-globe"><use href="#globe"/></svg><span class="s-crs">USER:100001</span><svg class="s-bub"><use href="#bubble"/></svg>
</div>
</div>

<div class="menu ctx">
<div class="item"><svg><use href="#zlay"/></svg><span><u>Z</u>oom to Layer(s)</span></div>
<div class="item dim"><svg><use href="#zlay"/></svg><span>Zoom a la <u>s</u>elección</span></div>
<div class="item"><svg><use href="#glasses"/></svg><span>Show in <u>O</u>verview</span></div>
<div class="item"><svg><use href="#box"/></svg><span>Show Feature <u>C</u>ount</span></div>
<div class="item"><svg viewBox="1 0 21 20"><use href="#abc" width="24" height="24"/></svg><span>Mostrar <u>E</u>tiquetas</span></div>
<div class="item"><span>Copiar capa</span></div>
<div class="item"><span>Cambiar <u>n</u>ombre de la capa</span></div>
<div class="item"><svg><use href="#db"/></svg><span>Actualizar capa SQL...</span></div>
<hr>
<div class="item"><svg><use href="#dup"/></svg><span><u>D</u>uplicar capa</span></div>
<div class="item"><svg><use href="#remove"/></svg><span><u>E</u>liminar capa...</span></div>
<hr>
<div class="item"><svg><use href="#table"/></svg><span>Abrir tabla de <u>a</u>tributos</span></div>
<div class="item"><svg><use href="#pencil"/></svg><span>Conmutar <u>e</u>dición</span></div>
<div class="item"><span><u>F</u>iltrar...</span></div>
<div class="item"><span>Cambiar fuente de datos...</span></div>
<hr>
<div class="item"><span>Establecer <u>v</u>isibilidad de escala de capas...</span></div>
<div class="item sub"><span>SRC de la capa</span></div>
<hr>
<div class="item sub hot"><span>E<u>x</u>portar</span></div>
<hr>
<div class="item sub"><span>Estilos</span></div>
<div class="item"><span>Añadir notas de la capa...</span></div>
<div class="item"><span><u>P</u>ropiedades...</span></div>
</div>

<div class="menu export">
<div class="item hot"><span>Gu<u>a</u>rdar objetos como...</span></div>
<div class="item dim"><span>Guardar objetos <u>s</u>eleccionados como...</span></div>
<div class="item"><span>Guardar como Archivo de <u>D</u>efinición de Capa...</span></div>
<div class="item"><span>Guardar como archivo de estilo de capa de <u>Q</u>GIS...</span></div>
</div>
</body>
</html>
```
FILE: styles.css
```css
* { box-sizing: border-box; }
body { margin: 0; width: 1080px; height: 676px; overflow: hidden; position: relative; background: #ececec; color: #262626; font-family: Inter, "Liberation Sans", sans-serif; font-size: 12px; }
svg { display: block; flex: none; }
.defs { display: none; }
.app { width: 1080px; height: 676px; display: flex; flex-direction: column; }

/* toolbars */
.bar { height: 36.25px; padding-top: 2px; flex: none; display: flex; align-items: center; background: linear-gradient(#f6f6f6, #eaeaea); border-bottom: 2px solid #d0d0d0; overflow: hidden; }
.bar.r1 { padding-top: 1px; }
.bar.r4 { padding-top: 3px; }
.t { width: 24px; height: 24px; margin: 0 3.5px; }
.off { opacity: .34; filter: grayscale(.6); }
.grip { width: 14.600px; height: 18px; flex: none; display: flex; justify-content: center; }
.grip::before { content: ""; width: 5px; height: 18px; background: radial-gradient(circle at 1px 1px, #c6c6c6 0, #c6c6c6 .6px, transparent 1px) 0 0 / 3px 3px; }
.grip.first { width: 12px; padding-left: 2px; }
.r4 .grip:not(.first) { width: 15.300px; }
.sep { width: 7px; height: 18px; flex: none; display: flex; justify-content: center; }
.sep::before { content: ""; width: 1px; background: #dcdcdc; }
.dd { width: 11px; flex: none; display: flex; justify-content: center; }
.dd::before { content: ""; border: 3.5px solid transparent; border-top: 4px solid #4b4b4b; border-bottom: 0; }
.pressed { width: 31px; height: 29px; flex: none; display: flex; align-items: center; background: #dadada; border: 1px solid #b5b5b5; border-radius: 3px; }
.pressed .t { margin: 0 2.5px; }
.corner { position: relative; flex: none; }
.corner::after { content: ""; position: absolute; right: 2px; bottom: 0; border: 2.5px solid transparent; border-top: 3px solid #444; border-bottom: 0; }
.more { width: 12.500px; flex: none; text-align: center; font-size: 14px; line-height: 14px; color: #555; }
.more.wide { width: 27.500px; padding-left: 14px; }
.y { fill: #fbe34e; stroke: #c2a10c; }
.gold { fill: #d9b520; stroke: #b8950c; }
.blue { fill: #5083b7; stroke: #386690; stroke-width: .6; }
.w1 { fill: none; stroke: #fff; stroke-width: 1.3; }
.w2 { fill: none; stroke: #fff; stroke-width: 2; }
.navy { fill: none; stroke: #385b7c; stroke-width: 1.5; }
.dot { fill: #fff; stroke: #46525c; }
.ic { font-family: "Open Sans", sans-serif; }
.b { font-weight: 700; }
.serif { font-family: "Liberation Serif", serif; font-weight: 700; }
.it { font-style: italic; }
.serifb { font-family: "DejaVu Serif", serif; font-weight: 700; }

/* layers panel and map */
.main { flex: 1; display: flex; min-height: 0; }
.panel { width: 359px; padding-right: 7px; display: flex; flex-direction: column; }
.title { height: 20px; display: flex; align-items: center; gap: 2px; padding: 0 0 0 4px; font-size: 10.800px; }
.title span { flex: 1; }
.winbtn { width: 11px; height: 11px; fill: none; stroke: #555; }
.winbtn:last-child { margin-right: 1px; }
.ptools { height: 27px; display: flex; align-items: center; gap: 8.200px; padding-left: 7px; }
.ptools svg { width: 15.500px; height: 16px; }
.ptools .dd { width: 9px; margin: 0 -2px 0 -4px; }
.tree { flex: 1; background: #fff; border: 1px solid #c6c6c6; border-width: 1px 0 1px 1px; }
.layer { height: 18px; background: #0d66e0; display: flex; align-items: center; padding-left: 21px; color: #fff; font-size: 12px; font-weight: 700; letter-spacing: .18px; }
.layer span { border-bottom: 1px solid #fff; line-height: 13px; }
.layer i { width: 15px; height: 1px; background: #2c60c8; margin: 0 6px; }
.check, .scheck { width: 13px; height: 13px; background: #fff; border: 1px solid #bbb; fill: none; stroke: #111; stroke-width: 2; }
.canvas { flex: 1; background: #fff; border: 1px solid #c6c6c6; border-width: 1px 0 1px 1px; margin-top: 1px; }
.map { width: 720px; height: 501px; }
.map g { fill: none; stroke: #8e4f9f; stroke-opacity: .5; stroke-width: 1.300; stroke-linejoin: round; }

/* status bar */
.status { height: 28px; flex: none; display: flex; align-items: center; padding-left: 4px; font-size: 11px; color: #333; white-space: nowrap; overflow: hidden; }
.locator { width: 270px; height: 22px; flex: none; background: #fff; border: 1px solid #bdbdbd; border-radius: 2px; display: flex; align-items: center; gap: 7px; padding-left: 7px; color: #666; font-size: 11.800px; }
.locator svg { width: 12px; height: 12px; }
.field { height: 20px; flex: none; background: #f7f7f7; border: 1px solid #b5b5b5; border-radius: 2px; padding-left: 6px; line-height: 18px; display: flex; justify-content: space-between; }
.field b { width: 14px; border-left: 1px solid #c4c4c4; background: #e8e8e8; display: flex; align-items: flex-end; justify-content: center; padding-bottom: 3px; }
.field b::before { content: ""; border: 3px solid transparent; border-top: 4px solid #555; border-bottom: 0; }
.s-coord { width: 64px; padding-left: 7px; font-size: 10.500px; }
.f-coord { width: 107px; }
.s-track { width: 16px; height: 16px; margin: 0 8px 0 4px; }
.s-scale { width: 17px; padding-left: 4px; }
.f-scale { width: 84px; }
.s-lock { width: 13px; height: 13px; margin: 0 6px 0 10px; }
.s-mag { width: 46px; font-size: 10px; }
.f-mag { width: 84px; padding-left: 4px; }
.s-rot { width: 37px; padding-left: 9px; }
.f-rot { width: 87px; padding-left: 4px; }
.scheck { margin-left: 5px; }
.s-rep { width: 79px; padding-left: 5px; font-size: 10.500px; }
.s-globe { width: 15px; height: 15px; }
.s-crs { width: 88px; padding-left: 2px; color: #111; font-size: 10.800px; }
.s-bub { width: 16px; height: 16px; }

/* context menus */
.menu { position: absolute; background: #fff; border: 1px solid #b0b0b0; box-shadow: 0 7px 18px rgba(0, 0, 0, .32), 0 0 2px rgba(0, 0, 0, .4); font-size: 12.200px; letter-spacing: -.13px; }
.ctx { left: 200px; top: 202px; width: 333px; height: 461px; }
.export { left: 532px; top: 570.500px; width: 344px; height: 90.500px; }
.item { height: 22.600px; display: flex; align-items: center; padding-left: 25px; white-space: nowrap; position: relative; }
.item svg { width: 15px; height: 15px; margin: 0 5px 0 -20px; }
.item u { text-decoration: none; border-bottom: 1px solid #777; line-height: 13px; display: inline-block; }
.menu hr { height: 1.700px; margin: 0 4px; border: 0; border-top: 1px solid #dcdcdc; }
.dim { color: #bababa; }
.dim u { border-color: #ccc; }
.dim svg { opacity: .35; }
.hot { background: #7ba3ec; color: #fff; margin: 0 -1px; padding-left: 26px; }
.hot u { border-color: #fff; }
.sub::after { content: ""; position: absolute; right: 4px; border: 3px solid transparent; border-left: 5px solid #555; border-right: 0; }
.hot.sub::after { border-left-color: #fff; right: 5px; }
.export .item { height: 22.400px; }
```
